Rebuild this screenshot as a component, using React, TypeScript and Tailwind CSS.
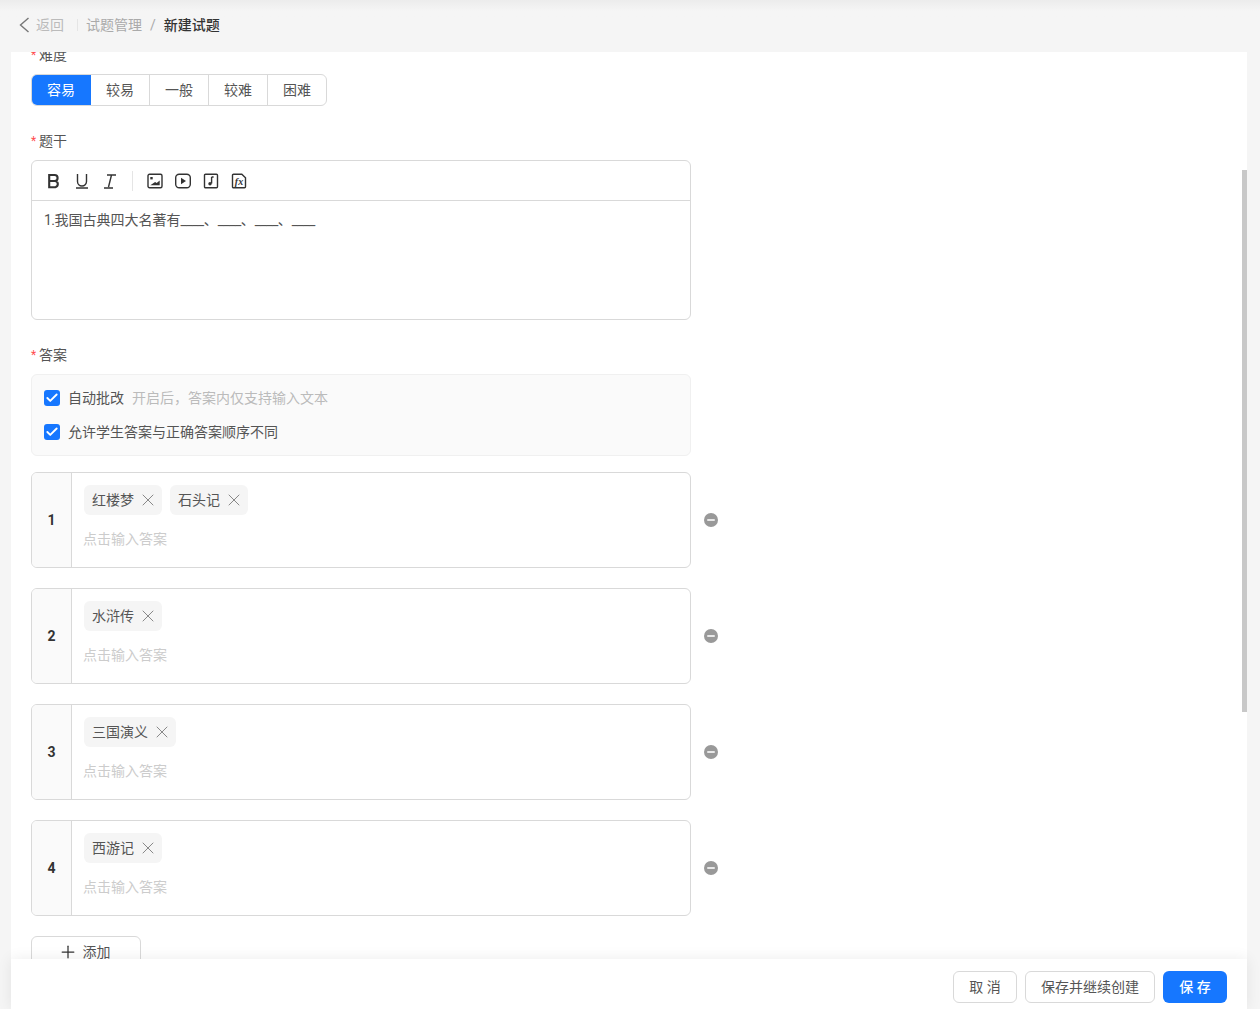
import React from "react";
import { Plus, X, Check } from "lucide-react";

const Label = ({ children }: { children: React.ReactNode }) => (
  <div className="flex h-[22px] items-center text-[14px] leading-[22px] text-[#555]">
    <span className="mr-[3px] w-[5px] text-[12px] leading-none text-[#ff4d4f]">*</span>
    <span>{children}</span>
  </div>
);

const Tag = ({ text }: { text: string }) => (
  <span className="flex h-[30px] items-center rounded-[6px] bg-[#f5f5f5] pl-2 pr-[9px] text-[14px] text-[#555]">
    {text}
    <span className="ml-[9px] flex h-[10px] w-[10px] items-center justify-center">
      <X className="shrink-0 text-[#777]" size={20} strokeWidth={1.05} />
    </span>
  </span>
);

const AnswerRow = ({ n, tags }: { n: number; tags: string[] }) => (
  <div className="flex items-center">
    <div className="flex h-[96px] w-[660px] overflow-hidden rounded-[6px] border border-[#d9d9d9]">
      <div className="flex w-[40px] items-center justify-center border-r border-[#d9d9d9] bg-[#fafafa] text-[14px] font-bold text-[#333]">
        {n}
      </div>
      <div className="flex-1 pl-[11px] pr-3 pt-3">
        <div className="ml-px flex gap-2">
          {tags.map((t) => (
            <Tag key={t} text={t} />
          ))}
        </div>
        <div className="mt-[13px] text-[14px] leading-[22px] text-[#ccc]">点击输入答案</div>
      </div>
    </div>
    <span className="ml-[13px] flex h-[14px] w-[14px] items-center justify-center rounded-full bg-[#999]">
      <span className="h-[2px] w-[8px] rounded-sm bg-[#e8e8e8]" />
    </span>
  </div>
);

const Seg = ({ text, active, last }: { text: string; active?: boolean; last?: boolean }) => (
  <div
    className={
      active
        ? "flex h-full w-[60px] items-center justify-center bg-[#1677ff] text-[14px] text-white"
        : last
          ? "flex h-full w-[58px] items-center justify-center text-[14px] text-[#555]"
          : "flex h-full w-[59px] items-center justify-center border-r border-[#d9d9d9] text-[14px] text-[#555]"
    }
  >
    {text}
  </div>
);

const CheckRow = ({ label, hint }: { label: string; hint?: string }) => (
  <div className="flex h-[22px] items-center text-[14px] text-[#555]">
    <span className="flex h-4 w-4 items-center justify-center rounded-[3px] bg-[#1677ff]">
      <Check className="text-white" size={14} strokeWidth={3.2} />
    </span>
    <span className="ml-2">{label}</span>
    {hint && <span className="ml-2 text-[#bbb]">{hint}</span>}
  </div>
);

const Blank = () => <span className="tracking-[-0.55px]">____</span>;

const IconBold = () => (
  <svg width="16" height="16" viewBox="0 0 16 16" fill="none" stroke="#333" strokeWidth="2.1">
    <path d="M3.2 2h5.4a3 3 0 0 1 0 6H3.2zM3.2 8h6.2a3.2 3.2 0 0 1 0 6.2H3.2z" />
  </svg>
);
const IconUnderline = () => (
  <svg width="16" height="16" viewBox="0 0 16 16" fill="none" stroke="#333" strokeWidth="1.4">
    <path d="M3.5 1v7.5a4.5 4.5 0 0 0 9 0V1M2 15h12" />
  </svg>
);
const IconItalic = () => (
  <svg width="16" height="16" viewBox="0 0 16 16" fill="none" stroke="#333" strokeWidth="1.4">
    <path d="M5 2h9M9.5 2l-3 12M2 15h9" />
  </svg>
);
const IconImage = () => (
  <svg width="16" height="16" viewBox="0 0 16 16" fill="none">
    <rect x="1" y="1.2" width="14" height="13.6" rx="1.5" stroke="#333" strokeWidth="1.4" />
    <rect x="3.3" y="4" width="2.4" height="2.4" fill="#333" />
    <path d="M3.3 12.3h9.4V7.5l-3 2.6-1.6-1z" fill="#333" />
  </svg>
);
const IconPlay = () => (
  <svg width="16" height="16" viewBox="0 0 16 16" fill="none">
    <rect x="0.7" y="1.2" width="14.6" height="13.6" rx="3.5" stroke="#333" strokeWidth="1.4" />
    <path d="M6 4.8l5 3.2-5 3.2z" fill="#333" />
  </svg>
);
const IconMusic = () => (
  <svg width="16" height="16" viewBox="0 0 16 16" fill="none">
    <path d="M2.5 1.2h11a1 1 0 0 1 1 1v11.6a1 1 0 0 1-1 1h-11a1 1 0 0 1-1-1V2.2a1 1 0 0 1 1-1z" stroke="#333" strokeWidth="1.4" />
    <path d="M8.6 4v6.5M8.6 4h2" stroke="#333" strokeWidth="1.4" />
    <circle cx="7" cy="10.8" r="1.7" fill="#333" />
  </svg>
);
const IconFx = () => (
  <svg width="16" height="16" viewBox="0 0 16 16" fill="none">
    <path d="M2.5 1.2h8.3l3.7 3.5v9.1a1 1 0 0 1-1 1h-11a1 1 0 0 1-1-1V2.2a1 1 0 0 1 1-1z" stroke="#333" strokeWidth="1.4" />
    <text x="8" y="11.5" textAnchor="middle" fontSize="10" fontStyle="italic" fontFamily="Liberation Serif" fontWeight="700" fill="#333">fx</text>
  </svg>
);

export default function App() {
  return (
    <div
      className="flex h-[1009px] w-[1260px] flex-col overflow-hidden bg-[#f5f5f5]"
      style={{ fontFamily: "Roboto, 'Noto Sans CJK SC', sans-serif" }}
    >
      <header className="flex h-[52px] shrink-0 items-center bg-gradient-to-b from-[#ececec] via-[#f5f5f5] to-[#f5f5f5] bg-[length:100%_22px] bg-no-repeat pb-[2px] pl-[19px] text-[14px]">
        <svg width="11" height="16" viewBox="0 0 11 16" fill="none" stroke="#777" strokeWidth="1.4">
          <path d="M9.5 1L1.5 8l8 7" />
        </svg>
        <span className="ml-[6px] text-[#bbb]">返回</span>
        <span className="ml-[13px] h-[12px] w-px bg-[#e5e5e5]" />
        <span className="ml-[8px] text-[#aaa]">试题管理</span>
        <span className="ml-[8px] mr-[8px] text-[#aaa]">/</span>
        <span className="font-medium text-[#333]">新建试题</span>
      </header>

      <main className="relative ml-[11px] mr-[13px] min-h-0 flex-1 overflow-hidden bg-white">
        <div className="-mt-[8px] pl-5">
          <Label>难度</Label>
          <div className="mt-[8px] flex h-[32px] w-[296px] overflow-hidden rounded-[6px] border border-[#d9d9d9]">
            <div className="-my-px -ml-px flex">
              <Seg text="容易" active />
            </div>
            <Seg text="较易" />
            <Seg text="一般" />
            <Seg text="较难" />
            <Seg text="困难" last />
          </div>

          <div className="mt-6">
            <Label>题干</Label>
          </div>
          <div className="mt-2 h-[160px] w-[660px] rounded-[6px] border border-[#d9d9d9]">
            <div className="flex h-[40px] items-center border-b border-[#d9d9d9] pl-[14px]">
              <div className="flex gap-3">
                <IconBold />
                <IconUnderline />
                <IconItalic />
              </div>
              <span className="mx-[14px] h-[20px] w-px bg-[#e5e5e5]" />
              <div className="flex gap-3">
                <IconImage />
                <IconPlay />
                <IconMusic />
                <IconFx />
              </div>
            </div>
            <div className="px-3 pt-2 text-[14px] leading-[22px] text-[#555]">
              <span className="tracking-[-0.5px]">1.</span>我国古典四大名著有<Blank />、<Blank />、<Blank />、<Blank />
            </div>
          </div>

          <div className="mt-6">
            <Label>答案</Label>
          </div>
          <div className="mt-2 flex h-[82px] w-[660px] flex-col gap-3 rounded-[6px] border border-[#f0f0f0] bg-[#fafafa] px-3 pt-[12px]">
            <CheckRow label="自动批改" hint="开启后，答案内仅支持输入文本" />
            <CheckRow label="允许学生答案与正确答案顺序不同" />
          </div>

          <div className="mt-4 flex flex-col gap-5">
            <AnswerRow n={1} tags={["红楼梦", "石头记"]} />
            <AnswerRow n={2} tags={["水浒传"]} />
            <AnswerRow n={3} tags={["三国演义"]} />
            <AnswerRow n={4} tags={["西游记"]} />
          </div>

          <button className="mt-5 flex h-[32px] w-[110px] items-center justify-center rounded-[6px] border border-[#d9d9d9] text-[14px] text-[#555]">
            <span className="mr-[9px] flex h-3 w-3 items-center justify-center">
              <Plus className="shrink-0 text-[#333]" size={20} strokeWidth={1.5} />
            </span>
            添加
          </button>
        </div>
        <div className="absolute right-0 top-[118px] h-[542px] w-[5px] bg-[#c8c8c8]" />
      </main>

      <footer className="relative ml-[11px] mr-[13px] flex h-[50px] shrink-0 items-center justify-end gap-2 bg-white pr-5 pt-[6px] shadow-[0_0_14px_rgba(0,0,0,0.08)]">
        <button className="h-[32px] w-[64px] rounded-[6px] border border-[#d9d9d9] text-[14px] text-[#555]">取 消</button>
        <button className="h-[32px] w-[130px] rounded-[6px] border border-[#d9d9d9] text-[14px] text-[#555]">保存并继续创建</button>
        <button className="h-[32px] w-[64px] rounded-[6px] bg-[#1677ff] text-[14px] font-medium text-white">保 存</button>
      </footer>
    </div>
  );
}
